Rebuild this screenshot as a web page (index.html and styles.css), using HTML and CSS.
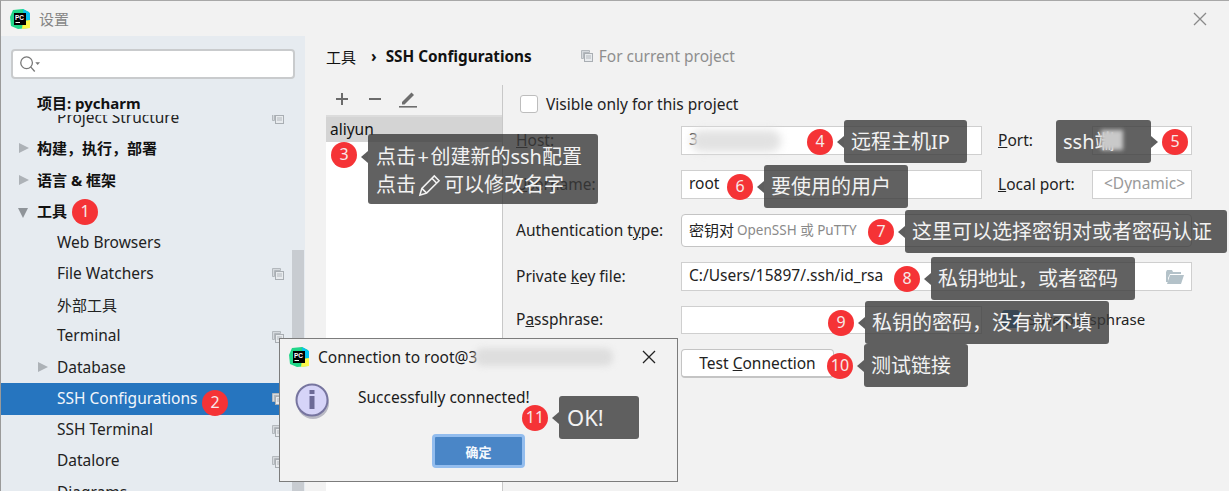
FILE: index.html
```html
<!DOCTYPE html>
<html lang="zh-CN">
  <head>
    <meta charset="UTF-8" />
    <title>设置</title>
    <link rel="stylesheet" href="styles.css">
  </head>

  <body>
    <div class="window">
      <div class="titlebar">
        <svg class="pc-logo" viewBox="0 0 20 20">
          <polygon points="3,1 13,0 19,3 20,12 19,19 8,20 1,17 0,8" fill="#21d789"/>
          <polygon points="13,0 20,4 20,13 14,10" fill="#07c3f2"/>
          <polygon points="12,20 20,19 20,11 13,12" fill="#fcf84a"/>
          <rect x="4" y="4" width="12" height="12" fill="#000"/>
          <text x="5" y="10.5" class="pc-text">PC</text>
          <rect x="5.5" y="13" width="4.5" height="1" fill="#fff"/>
        </svg>
        <span class="title-text">设置</span>
        <svg class="close-icon" viewBox="0 0 14 14"><path d="M1 1 13 13M13 1 1 13"/></svg>
      </div>

      <div class="content">
        <div class="sidebar">
          <div class="search">
            <svg class="search-icon" viewBox="0 0 18 16">
              <circle cx="6.5" cy="6.5" r="5"/>
              <path d="M10 10 13.5 14"/>
              <polygon points="14,6 18,6 16,8.5"/>
            </svg>
          </div>
          <div class="tree-head">项目: pycharm</div>
          <div class="tree">
            <div class="row leaf">Project Structure<svg class="copy-icon"><use href="#copy"/></svg></div>
            <div class="row group"><i class="arrow"></i>构建，执行，部署</div>
            <div class="row group"><i class="arrow"></i>语言 &amp; 框架</div>
            <div class="row group"><i class="arrow open"></i>工具</div>
            <div class="row leaf">Web Browsers</div>
            <div class="row leaf">File Watchers<svg class="copy-icon"><use href="#copy"/></svg></div>
            <div class="row leaf cjk">外部工具</div>
            <div class="row leaf">Terminal<svg class="copy-icon"><use href="#copy"/></svg></div>
            <div class="row leaf"><i class="arrow sub"></i>Database</div>
            <div class="row leaf selected">SSH Configurations<svg class="copy-icon"><use href="#copy"/></svg></div>
            <div class="row leaf">SSH Terminal<svg class="copy-icon"><use href="#copy"/></svg></div>
            <div class="row leaf">Datalore<svg class="copy-icon"><use href="#copy"/></svg></div>
            <div class="row leaf">Diagrams</div>
          </div>
          <div class="scrollbar"></div>
        </div>

        <div class="main">
          <div class="crumbs">
            <span>工具</span>
            <span class="crumb-sep">›</span>
            <b>SSH Configurations</b>
            <span class="for-project"><svg class="copy-icon"><use href="#copy"/></svg>For current project</span>
          </div>

          <div class="panels">
            <div class="list-panel">
              <div class="toolbar">
                <svg viewBox="0 0 14 14" class="tool"><path d="M7 1V13M1 7H13"/></svg>
                <svg viewBox="0 0 14 14" class="tool"><path d="M1 7H13"/></svg>
                <svg viewBox="0 0 18 18" class="tool-edit">
                  <polygon points="3,12 12.5,2.5 15,5 5.500,14.500 3,14.500"/>
                  <rect x="0" y="16" width="18" height="1.600"/>
                </svg>
              </div>
              <div class="config-list">
                <div class="config-item">aliyun</div>
              </div>
            </div>

            <div class="form-panel">
              <label class="visible-only"><span class="checkbox"></span>Visible only for this project</label>
              <div class="form-grid">
                <label class="lbl"><u>H</u>ost:</label>
                <div class="field">3<span class="blur-ip"></span></div>
                <label class="lbl side"><u>P</u>ort:</label>
                <div class="field"></div>

                <label class="lbl"><u>U</u>sername:</label>
                <div class="field">root</div>
                <label class="lbl side"><u>L</u>ocal port:</label>
                <div class="field hint">&lt;Dynamic&gt;</div>

                <label class="lbl">Authentication t<u>y</u>pe:</label>
                <div class="field select wide">密钥对<span class="muted">OpenSSH 或 PuTTY</span></div>

                <label class="lbl">Private <u>k</u>ey file:</label>
                <div class="field wide">C:/Users/15897/.ssh/id_rsa
                  <svg class="folder" viewBox="0 0 18 14">
                    <path d="M0 2 1 0H6L7 2H15V4H4L2 8V12H0Z"/>
                    <path d="M4 5H18L15 14H1Z"/>
                  </svg>
                </div>

                <label class="lbl">P<u>a</u>ssphrase:</label>
                <div class="field"></div>
                <label class="save-pass"><span class="checkbox checked"></span>Save passphrase</label>

                <div class="test-row"><button class="btn">Test <u>C</u>onnection</button></div>
              </div>
            </div>
          </div>
        </div>
      </div>

      <div class="dialog">
        <div class="dialog-title">
          <svg class="pc-logo small" viewBox="0 0 20 20">
            <polygon points="3,1 13,0 19,3 20,12 19,19 8,20 1,17 0,8" fill="#21d789"/>
            <polygon points="13,0 20,4 20,13 14,10" fill="#07c3f2"/>
            <polygon points="12,20 20,19 20,11 13,12" fill="#fcf84a"/>
            <rect x="4" y="4" width="12" height="12" fill="#000"/>
            <text x="5" y="10.5" class="pc-text">PC</text>
            <rect x="5.5" y="13" width="4.5" height="1" fill="#fff"/>
          </svg>
          <span>Connection to root@3</span>
          <span class="blur-host"></span>
          <svg class="close-icon dark" viewBox="0 0 14 14"><path d="M1 1 13 13M13 1 1 13"/></svg>
        </div>
        <div class="dialog-body">
          <svg class="info-icon" viewBox="0 0 36 38">
            <circle cx="18" cy="20" r="16" fill="#b9b9c4"/>
            <circle cx="17" cy="17" r="15.500" fill="#d6d4f8" stroke="#77759f" stroke-width="2"/>
            <rect x="14.500" y="7" width="5" height="4" fill="#6c6a96"/>
            <rect x="14.500" y="13" width="5" height="13" fill="#6c6a96"/>
          </svg>
          <span>Successfully connected!</span>
        </div>
        <div class="dialog-foot"><button class="ok-btn">确定</button></div>
      </div>

      <div class="note note-1"><span class="badge">1</span></div>
      <div class="note note-2"><span class="badge">2</span></div>
      <div class="note note-3">
        <span class="badge">3</span>
        <div class="bubble">
          <div>点击<span class="plus">+</span>创建新的ssh配置</div>
          <div class="pencil-line">点击<svg class="pencil" viewBox="0 0 24 24"><path d="M2 22 4 15 17 2 22 7 9 20ZM4 15 9 20M14.500 4.500 19.500 9.500"/></svg>可以修改名字</div>
        </div>
      </div>
      <div class="note note-4"><span class="badge">4</span><div class="bubble">远程主机IP</div></div>
      <div class="note note-5">
        <span class="badge">5</span>
        <div class="bubble">ssh端<span class="blur-port"></span></div>
      </div>
      <div class="note note-6"><span class="badge">6</span><div class="bubble">要使用的用户</div></div>
      <div class="note note-7"><span class="badge">7</span><div class="bubble">这里可以选择密钥对或者密码认证</div></div>
      <div class="note note-8"><span class="badge">8</span><div class="bubble">私钥地址，或者密码</div></div>
      <div class="note note-9"><span class="badge">9</span><div class="bubble">私钥的密码，没有就不填</div></div>
      <div class="note note-10"><span class="badge">10</span><div class="bubble">测试链接</div></div>
      <div class="note note-11"><span class="badge">11</span><div class="bubble">OK!</div></div>
    </div>

    <svg class="defs">
      <symbol id="copy" viewBox="0 0 12 12">
        <path d="M0.500 0.500H8.500V2.500H2.500V8.500H0.500Z" fill="#d5d9dd" stroke="#b3b8bd"/>
        <rect x="3.500" y="3.500" width="8" height="8" fill="#e8ebee" stroke="#a9aeb3"/>
        <path d="M5 6H10M5 8H10" stroke="#b3b8bd"/>
      </symbol>
    </svg>
  </body>
</html>
```

FILE: styles.css
```css
* {
  box-sizing: border-box;
}

html,
body {
  margin: 0;
  height: 491px;
  overflow: hidden;
}

body {
  font-family: "Noto Sans", "Noto Sans CJK SC", sans-serif;
  font-size: 15.500px;
  color: #1a1a1a;
}

.defs {
  display: none;
}

.window {
  position: relative;
  height: 491px;
  display: flex;
  flex-direction: column;
  background: #f2f2f2;
  border-top: 1px solid #a8a8a8;
  border-left: 1px solid #9a9a9a;
  overflow: hidden;
}

/* title bar */
.titlebar {
  height: 35px;
  flex: none;
  display: flex;
  align-items: center;
  padding-left: 9px;
}

.pc-logo {
  width: 20px;
  height: 20px;
  flex: none;
}

.pc-text {
  font-family: "Liberation Sans", sans-serif;
  font-size: 6.500px;
  font-weight: 700;
  fill: #fff;
}

.title-text {
  margin-left: 9px;
  font-size: 15px;
  color: #858585;
}

.close-icon {
  width: 14px;
  height: 14px;
  margin-left: auto;
  margin-right: 22px;
  fill: none;
  stroke: #8a8a8a;
  stroke-width: 1.300;
}

.close-icon.dark {
  margin-right: 21px;
  stroke: #222;
}

.content {
  flex: 1;
  display: flex;
  min-height: 0;
}

/* left tree */
.sidebar {
  position: relative;
  width: 304px;
  flex: none;
  background: #e6ebf0;
  overflow: hidden;
}

.search {
  height: 30px;
  margin: 13px 10px 0 10px;
  background: #fff;
  border: 2px solid #c9cbcd;
  border-radius: 4px;
  display: flex;
  align-items: center;
  padding-left: 6px;
}

.search-icon {
  width: 21px;
  height: 19px;
  fill: #777;
  stroke: none;
}

.search-icon circle,
.search-icon path {
  fill: none;
  stroke: #777;
  stroke-width: 1.100;
}

.tree-head {
  position: relative;
  z-index: 1;
  height: 36px;
  padding: 14px 0 0 36px;
  font-size: 15px;
  line-height: 21px;
  font-weight: 700;
  background: #e6ebf0;
  color: #111;
}

.tree {
  margin-top: -13px;
}

.row {
  position: relative;
  height: 31.250px;
  display: flex;
  align-items: center;
  padding-bottom: 2px;
  color: #222;
}

.group {
  padding-left: 36px;
  font-size: 15px;
  font-weight: 700;
  color: #111;
}

.leaf {
  padding-left: 56px;
}

.cjk {
  font-size: 15px;
}

.selected {
  background: #2675bf;
  color: #f2f6fb;
}

.arrow {
  position: absolute;
  left: 18px;
  top: 10px;
  border-style: solid;
  border-width: 5.500px 0 5.500px 10px;
  border-color: transparent transparent transparent #adb2b7;
}

.arrow.open {
  border-width: 10px 5.500px 0 5.500px;
  border-color: #8f9499 transparent transparent transparent;
  left: 17px;
  top: 12px;
}

.arrow.sub {
  left: 37px;
}

.copy-icon {
  width: 12px;
  height: 12px;
}

.row .copy-icon {
  position: absolute;
  left: 271px;
  top: 10px;
}

.scrollbar {
  position: absolute;
  left: 291px;
  top: 214px;
  bottom: 0;
  width: 12px;
  background: #c8ccd1;
}

/* right side */
.main {
  flex: 1;
  display: flex;
  flex-direction: column;
  min-width: 0;
}

.crumbs {
  height: 49px;
  flex: none;
  display: flex;
  align-items: center;
  padding: 0 0 9px 21px;
  color: #111;
}

.crumbs span:first-child {
  font-size: 15px;
}

.crumb-sep {
  margin: 0 9px 0 15px;
  font-weight: 700;
}

.crumbs b {
  font-size: 15.300px;
}

.for-project {
  margin-left: 49px;
  display: flex;
  align-items: center;
  gap: 6px;
  color: #8e8e8e;
}

.panels {
  flex: 1;
  display: flex;
  min-height: 0;
}

.list-panel {
  width: 177px;
  margin-left: 21px;
  flex: none;
  display: flex;
  flex-direction: column;
  border-right: 1px solid #c8c8c8;
}

.toolbar {
  height: 32px;
  flex: none;
  display: flex;
  align-items: center;
  padding: 0 0 2px 9px;
  border-bottom: 2px solid #dcdcdc;
}

.tool {
  width: 14px;
  height: 14px;
  margin-right: 19px;
  fill: none;
  stroke: #6b6b6b;
  stroke-width: 2;
}

.tool-edit {
  width: 18px;
  height: 18px;
  margin-left: -2px;
  fill: #6e6e6e;
}

.config-list {
  flex: 1;
  background: #fff;
}

.config-item {
  height: 25px;
  line-height: 25px;
  padding-left: 4px;
  background: #d4d4d4;
  color: #111;
}

.form-panel {
  flex: 1;
  padding: 9px 0 0 13px;
}

.visible-only {
  display: flex;
  align-items: center;
  height: 20px;
  padding-left: 4px;
  color: #222;
}

.checkbox {
  width: 18px;
  height: 18px;
  margin-right: 8px;
  flex: none;
  background: #fff;
  border: 1px solid #bdbdbd;
  border-radius: 3px;
}

.checkbox.checked {
  background: #2f7fc4;
  border-color: #2f7fc4;
}

.form-grid {
  display: grid;
  grid-template-columns: 165px 301px 16px 94px 100px;
  grid-template-rows: 29px 29px 33px 29px 28px 29px;
  row-gap: 15px;
  margin-top: 12px;
  align-items: stretch;
}

.lbl {
  align-self: center;
  padding-bottom: 2px;
  color: #222;
}

.side {
  grid-column: 4;
}

.lbl:not(.side) {
  grid-column: 1;
}

.field {
  position: relative;
  display: flex;
  align-items: center;
  padding: 0 0 3px 7px;
  background: #fff;
  border: 1px solid #cfcfcf;
  color: #222;
}

.field.wide {
  grid-column: 2 / 6;
}

.select {
  border-radius: 4px;
  border-color: #c4c4c4;
  font-size: 15px;
}

.muted {
  margin-left: 3px;
  font-size: 13.500px;
  color: #8a8a8a;
}

.hint {
  padding-left: 11px;
  color: #9a9a9a;
}

.folder {
  position: absolute;
  right: 7px;
  top: 7px;
  width: 18px;
  height: 14px;
  fill: #b4c2c9;
}

.blur-ip {
  position: absolute;
  left: 9px;
  top: 3px;
  width: 90px;
  height: 22px;
  background: #e2e2e2;
  border-radius: 10px;
  filter: blur(4px);
}

.save-pass {
  grid-column: 4 / 6;
  margin-left: 4px;
  padding-bottom: 3px;
  display: flex;
  align-items: center;
  font-size: 15px;
  color: #222;
  white-space: nowrap;
}

.test-row {
  grid-column: 2;
  display: flex;
}

.btn {
  width: 153px;
  font: inherit;
  color: #222;
  background: #fff;
  border: 1px solid #c4c4c4;
  border-bottom-width: 2px;
  border-radius: 4px;
  padding: 0;
}

/* dialog on top */
.dialog {
  position: absolute;
  left: 278px;
  top: 337px;
  width: 399px;
  height: 144px;
  background: #f2f2f2;
  border: 1px solid #7c7c7c;
}

.dialog-title {
  height: 36px;
  display: flex;
  align-items: center;
  padding-left: 9px;
  color: #1c1c1c;
}

.dialog-title span:first-of-type {
  margin-left: 9px;
  white-space: nowrap;
}

.pc-logo.small {
  width: 20px;
  height: 20px;
}

.blur-host {
  width: 138px;
  height: 18px;
  margin-left: -2px;
  background: #dedede;
  border-radius: 8px;
  filter: blur(3px);
}

.dialog-body {
  height: 59px;
  display: flex;
  align-items: flex-start;
  padding: 8px 0 0 15px;
}

.dialog-body span {
  margin: 3px 0 0 27px;
}

.info-icon {
  width: 36px;
  height: 38px;
  flex: none;
}

.dialog-foot {
  display: flex;
  justify-content: center;
}

.ok-btn {
  width: 93px;
  height: 34px;
  font: inherit;
  font-size: 13px;
  font-weight: 700;
  color: #f4f8fd;
  background: #4a86c7;
  border: 3px solid #93bdee;
  border-radius: 4px;
}

/* red numbers and grey callouts */
.note {
  position: absolute;
  display: flex;
  align-items: center;
  gap: 11px;
}

.badge {
  width: 26px;
  height: 26px;
  flex: none;
  border-radius: 50%;
  background: #f53336;
  color: #f7e9e9;
  font-size: 16px;
  line-height: 25px;
  text-align: center;
}

.bubble {
  position: relative;
  height: 43px;
  padding-left: 7px;
  font-size: 20px;
  line-height: 43px;
  color: #f2f2f2;
  background: rgba(58, 58, 58, 0.8);
  border-radius: 3px;
  white-space: nowrap;
}

.bubble::before {
  content: "";
  position: absolute;
  left: -7px;
  top: 50%;
  margin-top: -6px;
  border-style: solid;
  border-width: 6px 7px 6px 0;
  border-color: transparent #5e5e5e transparent transparent;
}

.note-1 { left: 71px; top: 198px; }
.note-2 { left: 201px; top: 389px; }

.note-3 { left: 330px; top: 133px; align-items: flex-start; }
.note-3 .badge { margin-top: 8px; }
.note-3 .bubble { width: 230px; height: 70px; padding: 9px 0 0 8px; line-height: 28px; }
.note-3 .bubble::before { top: 23px; }

.plus {
  margin: 0 1.500px;
}

.pencil-line {
  display: flex;
  align-items: center;
}

.pencil {
  width: 23px;
  height: 23px;
  margin: 0 3px 0 2px;
  fill: none;
  stroke: #f2f2f2;
  stroke-width: 1.600;
}

.note-4 { left: 806px; top: 119px; }
.note-4 .bubble { width: 123px; }

.note-5 { left: 1055px; top: 119px; flex-direction: row-reverse; }
.note-5 .bubble { width: 95px; }
.note-5 .bubble::before {
  left: auto;
  right: -7px;
  border-width: 6px 0 6px 7px;
  border-color: transparent transparent transparent #5e5e5e;
}

.blur-port {
  position: absolute;
  left: 45px;
  top: 10px;
  width: 22px;
  height: 20px;
  background: #c9c9c9;
  filter: blur(2px);
}

.note-6 { left: 726px; top: 164px; }
.note-6 .bubble { width: 144px; }

.note-7 { left: 867px; top: 209px; }
.note-7 .bubble { width: 322px; }

.note-8 { left: 893px; top: 256px; }
.note-8 .bubble { width: 204px; }

.note-9 { left: 827px; top: 300px; }
.note-9 .bubble { width: 244px; }

.note-10 { left: 826px; top: 343px; }
.note-10 .bubble { width: 104px; }

.note-11 { left: 521px; top: 395px; }
.note-11 .bubble { width: 80px; padding-left: 8px; font-size: 22px; }
```
